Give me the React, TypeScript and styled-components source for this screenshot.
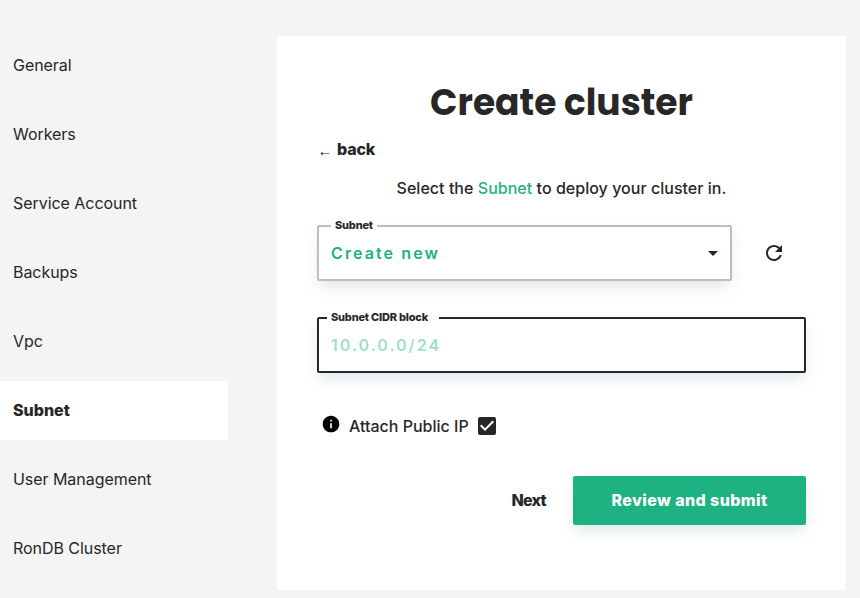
import React from "react";
import styled, { createGlobalStyle } from "styled-components";

const ink = "#272727";
const green = "#1eb182";
const shadow = "0 7px 14px -2px rgba(105, 135, 149, 0.22)";

const GlobalStyle = createGlobalStyle`
  * { box-sizing: border-box; }
  body {
    margin: 0;
    background: #f4f4f4;
    color: ${ink};
    font-family: Inter, "Liberation Sans", sans-serif;
    font-size: 16px;
    overflow: hidden;
  }
  button { font: inherit; color: inherit; border: 0; padding: 0; background: none; cursor: pointer; }
`;

const Page = styled.div`
  display: flex;
  align-items: flex-start;
  gap: 49px;
  width: 860px;
  height: 598px;
  padding-top: 36px;
`;

const Steps = styled.nav`
  display: flex;
  flex-direction: column;
  gap: 10px;
  width: 228px;
`;

const Step = styled.a<{ $active?: boolean }>`
  display: flex;
  align-items: center;
  height: 59px;
  padding: 0 0 2px 13px;
  border-radius: 0 2px 2px 0;
  background: ${(p) => (p.$active ? "#fff" : "transparent")};
  font-weight: ${(p) => (p.$active ? 800 : 400)};
  letter-spacing: ${(p) => (p.$active ? "0" : "-0.05px")};
`;

const Panel = styled.main`
  display: flex;
  flex-direction: column;
  width: 569px;
  height: 554px;
  padding: 38px 40px 0;
  border-radius: 2px;
  background: #fff;
`;

const Title = styled.h1`
  margin: 0;
  height: 56px;
  line-height: 58px;
  text-align: center;
  font-family: Poppins, Inter, sans-serif;
  font-size: 36px;
  font-weight: 700;
`;

const Back = styled.button`
  display: flex;
  align-items: center;
  align-self: flex-start;
  gap: 4px;
  height: 20px;
  margin-top: 9px;
  font-weight: 800;
  letter-spacing: -0.15px;
`;

const BackArrow = styled.span`
  width: 16px;
  padding-top: 2px;
  text-align: center;
  font-family: "Liberation Sans", sans-serif;
  font-size: 15px;
  font-weight: 400;
`;

const Lead = styled.p`
  margin: 19px 0 0;
  height: 20px;
  line-height: 20px;
  text-align: center;
  font-weight: 500;
  letter-spacing: 0.03px;
`;

const Accent = styled.span`
  color: ${green};
`;

const SelectRow = styled.div`
  display: flex;
  align-items: center;
  gap: 30px;
  margin-top: 27px;
`;

const Field = styled.div<{ $color: string }>`
  position: relative;
  display: flex;
  align-items: center;
  justify-content: space-between;
  flex: none;
  height: 56px;
  padding: 0 5px 0 12px;
  border: 2px solid ${(p) => p.$color};
  border-radius: 2px;
  background: #fff;
  box-shadow: ${shadow};
`;

const SelectField = styled(Field)`
  width: 415px;
`;

const TextField = styled(Field)`
  width: 489px;
  margin-top: 36px;
`;

const FieldLabel = styled.label<{ $left: number; $width: number }>`
  position: absolute;
  top: -9px;
  left: ${(p) => p.$left}px;
  width: ${(p) => p.$width}px;
  padding-left: 4px;
  background: #fff;
  font-size: 11px;
  line-height: 14px;
  font-weight: 800;
  letter-spacing: -0.2px;
  white-space: nowrap;
`;

const Value = styled.span`
  color: ${green};
  font-weight: 600;
  letter-spacing: 2.1px;
`;

const CidrInput = styled.input`
  width: 100%;
  padding: 0;
  border: 0;
  outline: 0;
  background: transparent;
  font: inherit;
  font-weight: 600;
  letter-spacing: 2px;
  &::placeholder { color: ${green}; opacity: 0.42; }
`;

const IconButton = styled.button`
  display: flex;
`;

const OptionRow = styled.div`
  display: flex;
  align-items: center;
  height: 24px;
  margin-top: 41px;
  padding-left: 4px;
  font-weight: 500;
`;

const InfoMark = styled.span`
  display: flex;
  margin: -4px 8px 0 0;
`;

const CheckMark = styled.span`
  display: flex;
  margin-left: 6px;
`;

const Actions = styled.div`
  display: flex;
  justify-content: flex-end;
  align-items: center;
  gap: 27px;
  margin-top: 38px;
`;

const NextButton = styled.button`
  padding-bottom: 2px;
  font-weight: 800;
  letter-spacing: -0.7px;
`;

const SubmitButton = styled.button`
  width: 233px;
  height: 49px;
  padding-bottom: 2px;
  border-radius: 2px;
  background: ${green};
  color: #fff;
  font-weight: 800;
  letter-spacing: 0.4px;
  box-shadow: ${shadow};
`;

const Icon = ({ d, size = 24, fill = ink }: { d: string; size?: number; fill?: string }) => (
  <svg width={size} height={size} viewBox="0 0 24 24" fill={fill} aria-hidden="true">
    <path d={d} />
  </svg>
);

const paths = {
  caret: "M7 10l5 5 5-5z",
  refresh:
    "M17.65 6.35C16.2 4.9 14.21 4 12 4c-4.42 0-7.99 3.58-7.99 8s3.57 8 7.99 8c3.73 0 6.84-2.55 7.73-6h-2.08c-.82 2.33-3.04 4-5.65 4-3.31 0-6-2.69-6-6s2.69-6 6-6c1.66 0 3.14.69 4.22 1.78L13 11h7V4l-2.35 2.35z",
  info: "M12 2C6.48 2 2 6.48 2 12s4.48 10 10 10 10-4.48 10-10S17.52 2 12 2zm1 15h-2v-6h2v6zm0-8h-2V7h2v2z",
  check:
    "M19 3H5c-1.11 0-2 .9-2 2v14c0 1.1.89 2 2 2h14c1.11 0 2-.9 2-2V5c0-1.1-.89-2-2-2zm-9 14l-5-5 1.41-1.41L10 14.17l7.59-7.59L19 8l-9 9z",
};

const steps = ["General", "Workers", "Service Account", "Backups", "Vpc", "Subnet", "User Management", "RonDB Cluster"];

export default function App() {
  return (
    <>
      <GlobalStyle />
      <Page>
        <Steps>
          {steps.map((name) => (
            <Step key={name} $active={name === "Subnet"}>{name}</Step>
          ))}
        </Steps>
        <Panel>
          <Title>Create cluster</Title>
          <Back><BackArrow>←</BackArrow>back</Back>
          <Lead>Select the <Accent>Subnet</Accent> to deploy your cluster in.</Lead>
          <SelectRow>
            <SelectField $color="#bdbdbd">
              <FieldLabel $left={12} $width={46}>Subnet</FieldLabel>
              <Value>Create new</Value>
              <Icon d={paths.caret} />
            </SelectField>
            <IconButton aria-label="Refresh"><Icon d={paths.refresh} /></IconButton>
          </SelectRow>
          <TextField $color={ink}>
            <FieldLabel htmlFor="cidr" $left={8} $width={112}>Subnet CIDR block</FieldLabel>
            <CidrInput id="cidr" placeholder="10.0.0.0/24" />
          </TextField>
          <OptionRow>
            <InfoMark><Icon d={paths.info} size={20} fill="#000" /></InfoMark>
            Attach Public IP
            <CheckMark><Icon d={paths.check} /></CheckMark>
          </OptionRow>
          <Actions>
            <NextButton>Next</NextButton>
            <SubmitButton>Review and submit</SubmitButton>
          </Actions>
        </Panel>
      </Page>
    </>
  );
}
